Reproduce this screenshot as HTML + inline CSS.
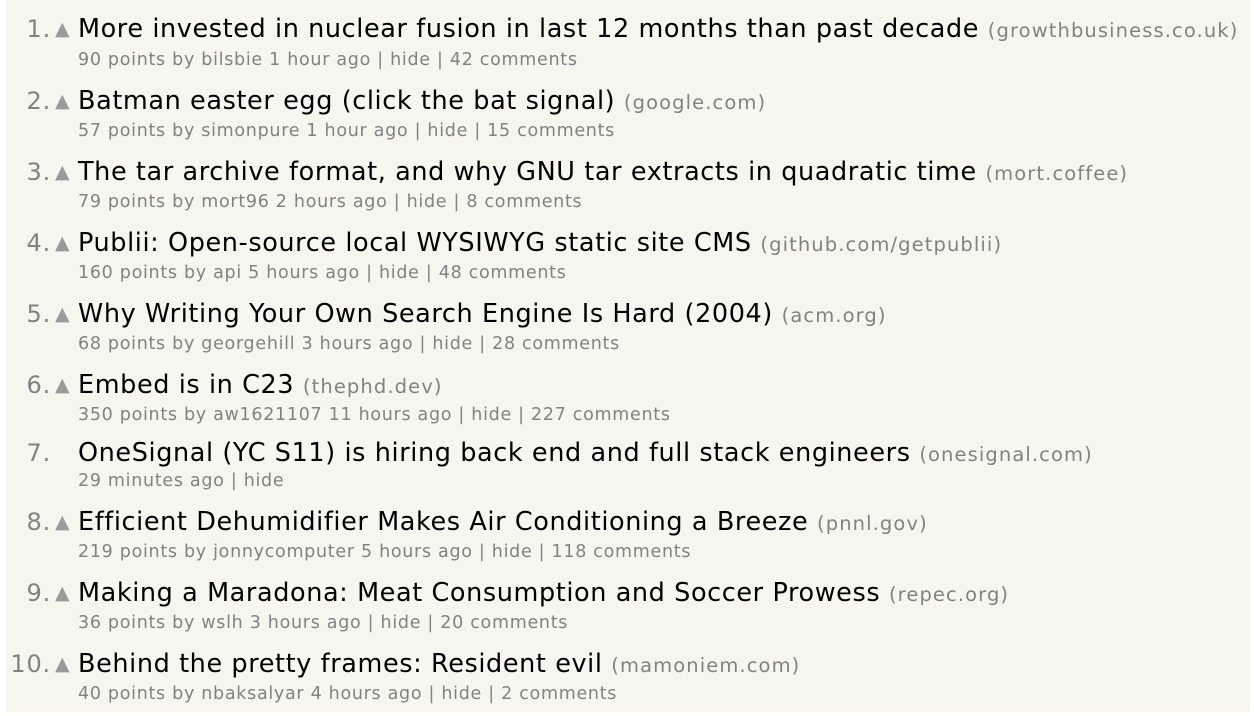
<!DOCTYPE html>
<html><head><meta charset="utf-8"><style>
body{margin:0;background:#fff;width:1254px;height:716px;overflow:hidden;font-family:"DejaVu Sans","Liberation Sans",sans-serif;}
#bg{position:absolute;left:6px;top:0;width:1244px;height:712px;background:#f6f6ef;}
.t{position:absolute;left:0;height:30px;line-height:30px;white-space:nowrap;margin-top:1px;}
.r{position:absolute;left:0;width:51px;text-align:right;color:#828282;font-size:24px;letter-spacing:0.8px;}
.a{position:absolute;left:55px;top:0;color:#9a9a9a;font-size:19px;}
.ti{position:absolute;left:78px;color:#000;font-size:25.5px;letter-spacing:0.6px;}
.d{color:#828282;font-size:19.5px;letter-spacing:1.1px;}
.s{position:absolute;left:78px;height:20px;line-height:20px;color:#828282;font-size:17.5px;letter-spacing:0.7px;white-space:nowrap;margin-top:2px;}
</style></head><body><div id="bg"></div>
<div class="t" style="top:13px"><span class="r">1.</span><span class="a">▲</span><span class="ti">More invested in nuclear fusion in last 12 months than past decade <span class="d">(growthbusiness.co.uk)</span></span></div>
<div class="s" style="top:48px">90 points by bilsbie 1 hour ago | hide | 42 comments</div>
<div class="t" style="top:85px"><span class="r">2.</span><span class="a">▲</span><span class="ti">Batman easter egg (click the bat signal) <span class="d">(google.com)</span></span></div>
<div class="s" style="top:119px">57 points by simonpure 1 hour ago | hide | 15 comments</div>
<div class="t" style="top:156px"><span class="r">3.</span><span class="a">▲</span><span class="ti">The tar archive format, and why GNU tar extracts in quadratic time <span class="d">(mort.coffee)</span></span></div>
<div class="s" style="top:190px">79 points by mort96 2 hours ago | hide | 8 comments</div>
<div class="t" style="top:227px"><span class="r">4.</span><span class="a">▲</span><span class="ti">Publii: Open-source local WYSIWYG static site CMS <span class="d">(github.com/getpublii)</span></span></div>
<div class="s" style="top:261px">160 points by api 5 hours ago | hide | 48 comments</div>
<div class="t" style="top:298px"><span class="r">5.</span><span class="a">▲</span><span class="ti">Why Writing Your Own Search Engine Is Hard (2004) <span class="d">(acm.org)</span></span></div>
<div class="s" style="top:332px">68 points by georgehill 3 hours ago | hide | 28 comments</div>
<div class="t" style="top:369px"><span class="r">6.</span><span class="a">▲</span><span class="ti">Embed is in C23 <span class="d">(thephd.dev)</span></span></div>
<div class="s" style="top:403px">350 points by aw1621107 11 hours ago | hide | 227 comments</div>
<div class="t" style="top:437px"><span class="r">7.</span><span class="ti">OneSignal (YC S11) is hiring back end and full stack engineers <span class="d">(onesignal.com)</span></span></div>
<div class="s" style="top:469px">29 minutes ago | hide</div>
<div class="t" style="top:506px"><span class="r">8.</span><span class="a">▲</span><span class="ti">Efficient Dehumidifier Makes Air Conditioning a Breeze <span class="d">(pnnl.gov)</span></span></div>
<div class="s" style="top:540px">219 points by jonnycomputer 5 hours ago | hide | 118 comments</div>
<div class="t" style="top:577px"><span class="r">9.</span><span class="a">▲</span><span class="ti">Making a Maradona: Meat Consumption and Soccer Prowess <span class="d">(repec.org)</span></span></div>
<div class="s" style="top:611px">36 points by wslh 3 hours ago | hide | 20 comments</div>
<div class="t" style="top:648px"><span class="r">10.</span><span class="a">▲</span><span class="ti">Behind the pretty frames: Resident evil <span class="d">(mamoniem.com)</span></span></div>
<div class="s" style="top:682px">40 points by nbaksalyar 4 hours ago | hide | 2 comments</div>
</body></html>
